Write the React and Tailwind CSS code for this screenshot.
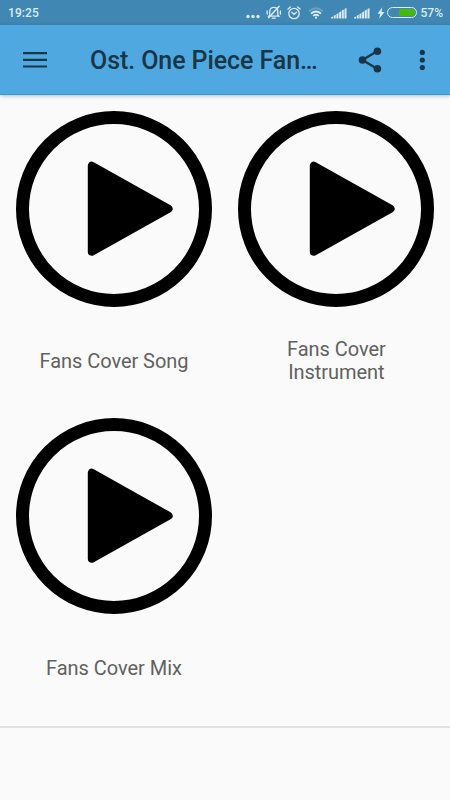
const albums = ['Fans Cover Song', 'Fans Cover Instrument', 'Fans Cover Mix']

function SignalIcon() {
  return (
    <svg className="ml-[7px] h-3 w-4 shrink-0" viewBox="0 0 16 12" fill="currentColor">
      <path d="M0 11.5V10.5L2 9.5V11.5zM2.7 11.5V8.8L4.7 7.8V11.5zM5.4 11.5V7.2L7.4 6V11.5zM8.1 11.5V5.5L10.1 4.2V11.5zM10.8 11.5V3.6L12.8 2.4V11.5zM13.5 11.5V2L15.5 1V11.5z" />
    </svg>
  )
}

function StatusBar() {
  return (
    <div className="flex h-[25px] items-center bg-[#4087b3] pl-2 pr-[7px] text-[#dcebf5]">
      <span className="text-[12px] leading-none font-medium tracking-[0.1px]">19:25</span>
      <div className="ml-auto flex items-center">
        <svg className="h-4 w-[14px]" viewBox="0 0 14 16" fill="currentColor">
          <circle cx="2" cy="11.5" r="1.7" />
          <circle cx="7" cy="11.5" r="1.7" />
          <circle cx="12" cy="11.5" r="1.7" />
        </svg>
        {/* muted bell */}
        <svg className="ml-[6px] h-4 w-4" viewBox="0 0 16 16" fill="none" stroke="currentColor" strokeWidth="1.3" strokeLinecap="round">
          <path d="M3.8 10.3V6.2C3.8 3.8 5.3 2.4 7.8 2.4C10.3 2.4 11.8 3.8 11.8 6.2V10.3L12.8 11.2H2.8zM6.3 13.2H9.3M1.2 6V9M14.4 6V9" />
          <path d="M13 1.4L2.8 12.6" strokeWidth="1.5" />
        </svg>
        {/* alarm */}
        <svg className="ml-[5px] h-[14px] w-[14px]" viewBox="0 0 14 14" fill="none" stroke="currentColor" strokeWidth="1.3" strokeLinecap="round">
          <circle cx="7" cy="7.5" r="5.2" />
          <path d="M1 3L3.4 1M13 3L10.6 1M4.8 6.3L7 8.3L9.5 6.3" />
        </svg>
        {/* wifi */}
        <svg className="ml-[7px] h-[14px] w-4" viewBox="0 0 16 14" fill="none" stroke="currentColor" strokeWidth="1.8">
          <path d="M1 5.2Q8 -0.8 15 5.2" opacity="0.25" />
          <path d="M3 7.6Q8 3.4 13 7.6" />
          <path d="M5.2 9.9Q8 7.7 10.8 9.9" />
          <circle cx="8" cy="11.7" r="1.1" fill="currentColor" stroke="none" />
        </svg>
        <SignalIcon />
        <SignalIcon />
        <svg className="ml-[7px] h-3 w-2" viewBox="0 0 8 12" fill="currentColor">
          <path d="M5.3 0.3L0.5 6.8H3.2L2.1 11.7L7.5 4.9H4.5z" />
        </svg>
        <div className="ml-[2px] flex h-[11px] w-[30px] justify-end rounded-full border border-[#dcebf5] p-px">
          <div className="h-full w-4 rounded-r-full bg-[#46b90c]" />
        </div>
        <span className="ml-1 text-[12px] leading-none font-medium">57%</span>
      </div>
    </div>
  )
}

function Toolbar() {
  return (
    <header className="flex h-[70px] items-center border-b border-[#2a9cdd] bg-[#50a8e0] text-[#183647] shadow-[0_1px_4px_rgba(0,0,0,0.25)]">
      <button className="ml-[23px]">
        <svg className="h-6 w-6" viewBox="0 0 24 24" fill="currentColor">
          <path d="M0 4H24V6.2H0zM0 10.7H24V12.9H0zM0 17.4H24V19.6H0z" />
        </svg>
      </button>
      <h1 className="ml-[43px] w-[240px] pt-[2px] text-[25px] leading-none font-medium tracking-[-0.08px] whitespace-nowrap">Ost. One Piece Fan…</h1>
      <button className="ml-7">
        <svg className="h-[26px] w-6" viewBox="0 0 24 26" fill="currentColor">
          <path d="M19 4.3L4.5 13L19 21.7" fill="none" stroke="currentColor" strokeWidth="2.3" />
          <circle cx="19.4" cy="4.3" r="3.8" />
          <circle cx="4.5" cy="13" r="3.8" />
          <circle cx="19.4" cy="21.7" r="3.8" />
        </svg>
      </button>
      <button className="ml-[37px]">
        <svg className="h-[22px] w-[6px]" viewBox="0 0 6 22" fill="currentColor">
          <circle cx="3.3" cy="3.4" r="2.6" />
          <circle cx="3.3" cy="11" r="2.6" />
          <circle cx="3.3" cy="18.6" r="2.6" />
        </svg>
      </button>
    </header>
  )
}

function PlayIcon() {
  return (
    <svg className="h-[196px] w-[196px]" viewBox="0 0 196 196">
      <circle cx="98" cy="98" r="91.5" fill="none" stroke="#000" strokeWidth="13" />
      <path d="M75.8 54.8V140.8L152.6 97.8z" stroke="#000" strokeWidth="8" strokeLinejoin="round" />
    </svg>
  )
}

export default function App() {
  return (
    <div className="flex h-[800px] w-[450px] flex-col overflow-hidden bg-[#fafafa] font-['Roboto',sans-serif]">
      <StatusBar />
      <Toolbar />
      <main className="grid flex-1 auto-rows-[307.5px] grid-cols-[196px_196px] content-start gap-x-[26.4px] pt-[15.5px] pl-4">
        {albums.map((name) => (
          <div key={name} className="flex flex-col items-center">
            <PlayIcon />
            <div className="flex h-[109px] items-center justify-center px-4 text-center text-[20px] leading-[23px] tracking-[-0.04px] text-[#616161]">
              {name}
            </div>
          </div>
        ))}
      </main>
      <footer className="h-[74px] border-t-2 border-[#e2e2e2]" />
    </div>
  )
}
